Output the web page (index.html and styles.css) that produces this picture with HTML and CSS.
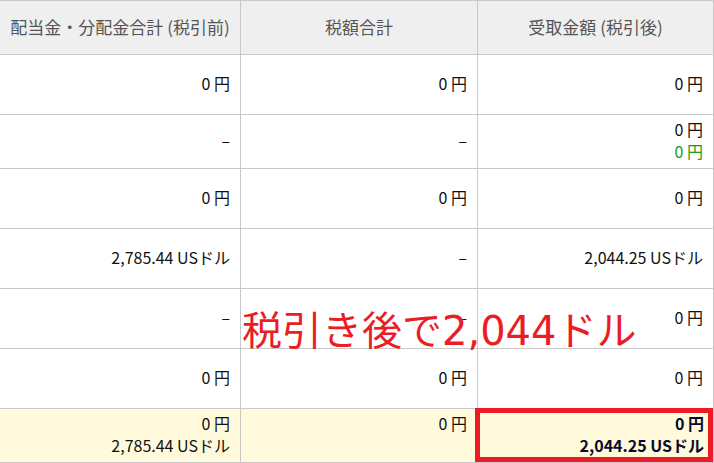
FILE: index.html
```html
<!DOCTYPE html>
<html lang="ja">
<head>
<meta charset="utf-8">
<link rel="stylesheet" href="styles.css">
</head>
<body>
<div class="wrap">
  <div class="table">
    <div class="cell head">配当金・分配金合計 (税引前)</div>
    <div class="cell head">税額合計</div>
    <div class="cell head">受取金額 (税引後)</div>

    <div class="cell r60">0 円</div>
    <div class="cell r60">0 円</div>
    <div class="cell r60">0 円</div>

    <div class="cell r54">–</div>
    <div class="cell r54">–</div>
    <div class="cell r54"><span>0 円</span><span class="green">0 円</span></div>

    <div class="cell r60">0 円</div>
    <div class="cell r60">0 円</div>
    <div class="cell r60">0 円</div>

    <div class="cell r60">2,785.44 USドル</div>
    <div class="cell r60">–</div>
    <div class="cell r60">2,044.25 USドル</div>

    <div class="cell r60">–</div>
    <div class="cell r60">–</div>
    <div class="cell r60">0 円</div>

    <div class="cell r60">0 円</div>
    <div class="cell r60">0 円</div>
    <div class="cell r60">0 円</div>

    <div class="cell r54 total"><span>0 円</span><span>2,785.44 USドル</span></div>
    <div class="cell r54 total">0 円</div>
    <div class="cell r54 total strong"><span>0 円</span><span>2,044.25 USドル</span></div>
  </div>
  <div class="note">税引き後で2,044ドル</div>
</div>
</body>
</html>
```

FILE: styles.css
```css
html, body {
  margin: 0;
  padding: 0;
  background: #ffffff;
}
.wrap {
  position: relative;
  width: 714px;
  height: 463px;
  overflow: hidden;
  font-family: "Noto Sans CJK JP", "Noto Sans", sans-serif;
}
.table {
  display: grid;
  grid-template-columns: 241px 237px 236px;
  grid-template-rows: 54px 60px 54px 60px 60px 60px 60px 54px;
  border-top: 1px solid #c8c8c8;
  width: 714px;
}
.cell {
  box-sizing: border-box;
  border-right: 1px solid #c8c8c8;
  border-bottom: 1px solid #c8c8c8;
  display: flex;
  flex-direction: column;
  justify-content: center;
  align-items: flex-end;
  padding-right: 10px;
  padding-bottom: 3px;
  font-size: 16px;
  line-height: 22px;
  color: #111111;
}
.head {
  background: #efefef;
  color: #555555;
  font-size: 17px;
  align-items: center;
  padding: 0 0 2px 0;
}
.green {
  color: #1a9a1a;
}
.total {
  background: #fffadc;
  justify-content: flex-start;
  padding-top: 3px;
  padding-bottom: 0;
}
.strong {
  position: relative;
  font-weight: bold;
  color: #0a0a2a;
  padding-right: 9px;
}
.strong::after {
  content: "";
  position: absolute;
  left: -3px;
  top: -1px;
  right: 0;
  bottom: 0;
  border: 5px solid #ec1c24;
}
.note {
  position: absolute;
  left: 242px;
  top: 309px;
  font-family: "DejaVu Sans", "Noto Sans CJK JP", sans-serif;
  font-size: 40px;
  line-height: 44px;
  color: #ec1c24;
  white-space: nowrap;
}
```
